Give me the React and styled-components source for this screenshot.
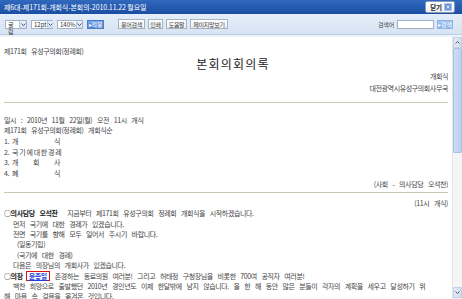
import React from 'react';
import styled, { createGlobalStyle } from 'styled-components';

const GlobalStyle = createGlobalStyle`
  html, body {
    margin: 0;
    padding: 0;
    background: #fff;
    overflow: hidden;
  }
  body {
    font-family: "Noto Sans CJK KR", "Noto Sans", sans-serif;
  }
`;

const Window = styled.div`
  width: 462px;
  height: 299px;
  display: flex;
  flex-direction: column;
  overflow: hidden;
`;

const TitleBar = styled.div`
  height: 14px;
  flex: none;
  display: flex;
  align-items: center;
  justify-content: space-between;
  padding: 0 7px 0 4px;
  background: linear-gradient(#3069be, #1b4ea2);
  color: #fff;
  font-size: 7px;
  letter-spacing: -0.1px;
`;

const CloseButton = styled.div`
  height: 10px;
  display: flex;
  align-items: center;
  gap: 2px;
  padding: 0 2px 0 4px;
  background: linear-gradient(#ffffff, #eef1f5);
  border: 1px solid #8c9cb5;
  border-radius: 2px;
  color: #222;
  font-size: 6.5px;
  font-weight: bold;
`;

const CloseIcon = styled.span`
  width: 6px;
  height: 6px;
  display: flex;
  align-items: center;
  justify-content: center;
  background: #6b93d9;
  border: 1px solid #b3c7ee;
`;

const Toolbar = styled.div`
  height: 20px;
  flex: none;
  display: flex;
  align-items: center;
  padding: 0 9px 0 5px;
  background: linear-gradient(#e4edf9, #d8e4f4);
  border-bottom: 1px solid #bccde6;
  font-size: 6.5px;
  color: #333;
`;

const ToolGroup = styled.div`
  display: flex;
  align-items: center;
  gap: ${p => p.$gap}px;
  margin-left: ${p => p.$offset};
`;

const Select = styled.div`
  width: ${p => p.$w}px;
  height: 9px;
  box-sizing: border-box;
  display: flex;
  align-items: stretch;
  background: #fff;
  border: 1px solid #a3b3cb;
`;

const SelectText = styled.span`
  flex: 1;
  padding-left: 2px;
  line-height: 7px;
  font-size: 6px;
  color: #333;
`;

const SelectArrow = styled.span`
  width: 6px;
  display: flex;
  align-items: center;
  justify-content: center;
  background: linear-gradient(#eaf1fb, #cfdcf0);
  border-left: 1px solid #b6c6de;
`;

const BlueButton = styled.div`
  width: ${p => p.$w}px;
  height: 9px;
  box-sizing: border-box;
  display: flex;
  align-items: center;
  justify-content: center;
  background: ${p => (p.$light ? 'linear-gradient(#a5c6ef, #86b0e6)' : 'linear-gradient(#7aa6e6, #4f84d6)')};
  border: 1px solid ${p => (p.$light ? '#8fb3e3' : '#4a7cc9')};
  color: #fff;
  font-size: 6px;
  letter-spacing: -0.2px;
`;

const GrayButton = styled.div`
  width: ${p => p.$w}px;
  height: 10px;
  box-sizing: border-box;
  display: flex;
  align-items: center;
  justify-content: center;
  background: linear-gradient(#ffffff, #eceff3);
  border: 1px solid #a9b2bf;
  color: #444;
  font-size: 6px;
  letter-spacing: -0.3px;
  white-space: nowrap;
`;

const SearchLabel = styled.span`
  font-size: 6px;
  color: #444;
  letter-spacing: -0.2px;
`;

const SearchInput = styled.div`
  width: 37px;
  height: 9px;
  box-sizing: border-box;
  background: #fff;
  border: 1px solid #9fb0c8;
`;

const Band = styled.div`
  height: 2px;
  flex: none;
  background: #edf3fa;
`;

const Main = styled.div`
  flex: 1;
  min-height: 0;
  display: flex;
`;

const Doc = styled.div`
  flex: 1;
  min-width: 0;
  padding: 9px 4px 0 4px;
  overflow: hidden;
  font-size: 7px;
  color: #444;
  letter-spacing: -0.4px;
  word-spacing: 3.5px;
  white-space: nowrap;
`;

const Line = styled.div`
  line-height: ${p => p.$lh || 11}px;
  text-align: ${p => p.$align || 'left'};
  padding-left: ${p => p.$indent || 0}px;
`;

const DocTitle = styled.div`
  font-size: 12px;
  line-height: 13px;
  letter-spacing: 1.2px;
  color: #222;
  text-align: center;
  padding-left: 14px;
`;

const Rule = styled.div`
  height: 1px;
  background: #cbc6b0;
  margin-top: ${p => p.$top}px;
`;

const Agenda = styled.div`
  margin-top: 11.6px;
`;

const AgendaLabel = styled.span`
  display: inline-block;
  width: 48px;
  margin-left: 3px;
  text-align: justify;
  text-align-last: justify;
  word-spacing: 0;
`;

const Speech = styled.div`
  margin-top: 4.8px;
`;

const Speaker = styled.span`
  font-weight: bold;
  color: #222;
  margin-right: 5px;
`;

const NameBox = styled.span`
  display: inline-block;
  line-height: 8px;
  padding: 0 2px;
  margin: 0 5px 0 3px;
  border: 1px solid #e01010;
  color: #1d3fe0;
  font-weight: bold;
  text-decoration: underline;
`;

const Scrollbar = styled.div`
  width: 10px;
  flex: none;
  display: flex;
  flex-direction: column;
  background: #f5f5f5;
  border-left: 1px solid #e6e6e6;
  box-sizing: border-box;
`;

const ScrollArrow = styled.div`
  height: 9px;
  flex: none;
  display: flex;
  align-items: center;
  justify-content: center;
  background: linear-gradient(90deg, #e3ebf7, #d2ddef);
  border: 1px solid #c3d1e8;
  margin-bottom: ${p => p.$bottom || 0}px;
`;

const Thumb = styled.div`
  height: 103px;
  flex: none;
  background: linear-gradient(90deg, #cddcf5, #bcd0f0);
  border: 1px solid #aac0e6;
  border-radius: 1px;
`;

const Track = styled.div`
  flex: 1;
`;

const Chevron = ({ up }) => (
  <svg width="5" height="3" viewBox="0 0 5 3">
    <path d={up ? 'M0.5 2.5 L2.5 0.5 L4.5 2.5' : 'M0.5 0.5 L2.5 2.5 L4.5 0.5'} fill="none" stroke="#3a4a66" strokeWidth="0.9" />
  </svg>
);

const DropSelect = ({ w, children }) => (
  <Select $w={w}>
    <SelectText>{children}</SelectText>
    <SelectArrow>
      <Chevron />
    </SelectArrow>
  </Select>
);

const agenda = [
  ['1.', '개식'],
  ['2.', '국기에대한경례'],
  ['3.', '개회사'],
  ['4.', '폐식'],
];

export default function App() {
  return (
    <Window>
      <GlobalStyle />
      <TitleBar>
        <span>제6대-제171회-개회식-본회의-2010.11.22 월요일</span>
        <CloseButton>
          닫기
          <CloseIcon>
            <svg width="4" height="4" viewBox="0 0 4 4">
              <path d="M0.5 0.5 L3.5 3.5 M3.5 0.5 L0.5 3.5" stroke="#fff" strokeWidth="0.8" />
            </svg>
          </CloseIcon>
        </CloseButton>
      </TitleBar>

      <Toolbar>
        <ToolGroup $gap={4}>
          <DropSelect w={22}>굴림</DropSelect>
          <DropSelect w={22}>12pt</DropSelect>
          <DropSelect w={26}>140%</DropSelect>
          <BlueButton $w={17}>▸적용</BlueButton>
        </ToolGroup>
        <ToolGroup $gap={3} $offset="14px">
          <GrayButton $w={27}>용어검색</GrayButton>
          <GrayButton $w={15}>인쇄</GrayButton>
          <GrayButton $w={21}>도움말</GrayButton>
          <GrayButton $w={38}>페이지맞보기</GrayButton>
        </ToolGroup>
        <ToolGroup $gap={3} $offset="auto">
          <SearchLabel>검색어</SearchLabel>
          <SearchInput />
          <BlueButton $w={16} $light>▸검색</BlueButton>
        </ToolGroup>
      </Toolbar>
      <Band />

      <Main>
        <Doc>
          <Line>제171회 유성구의회(정례회)</Line>
          <DocTitle>본회의회의록</DocTitle>
          <Line $lh={12} $align="right">개회식</Line>
          <Line $lh={12} $align="right">대전광역시유성구의회사무국</Line>
          <Rule $top={8} />

          <Agenda>
            <Line $lh={10.7}>일시 : 2010년 11월 22일(월) 오전 11시 개식</Line>
            <Line $lh={10.7}>제171회 유성구의회(정례회) 개회식순</Line>
            {agenda.map(([num, label]) => (
              <Line $lh={10.7} key={num}>
                {num}
                <AgendaLabel>{label.split('').join(' ')}</AgendaLabel>
              </Line>
            ))}
            <Line $lh={10.7} $align="right">(사회 - 의사담당 오석찬)</Line>
          </Agenda>
          <Rule $top={2.5} />

          <Speech>
            <Line $lh={10.4} $align="right">(11시 개식)</Line>
            <Line $lh={10.4}>
              <Speaker>○의사담당 오석찬</Speaker> 지금부터 제171회 유성구의회 정례회 개회식을 시작하겠습니다.
            </Line>
            <Line $lh={10.4} $indent={9}>먼저 국기에 대한 경례가 있겠습니다.</Line>
            <Line $lh={10.4} $indent={9}>전면 국기를 향해 모두 일어서 주시기 바랍니다.</Line>
            <Line $lh={10.4} $indent={13}>(일동기립)</Line>
            <Line $lh={10.4} $indent={13}>(국기에 대한 경례)</Line>
            <Line $lh={10.4} $indent={9}>다음은 의장님의 개회사가 있겠습니다.</Line>
            <Line $lh={10.4}>
              <Speaker style={{ marginRight: 0 }}>○의장</Speaker>
              <NameBox>윤종일</NameBox>
              존경하는 동료의원 여러분! 그리고 허태정 구청장님을 비롯한 700여 공직자 여러분!
            </Line>
            <Line $lh={10.4} $indent={9}>
              백찬 희망으로 출발했던 2010년 경인년도 이제 한달밖에 남지 않습니다. 올 한 해 동안 많은 분들이 각자의 계획을 세우고 달성하기 위
            </Line>
            <Line $lh={10.4}>해 마음 속 걸음을 옮겨온 것입니다.</Line>
          </Speech>
        </Doc>

        <Scrollbar>
          <ScrollArrow>
            <Chevron up />
          </ScrollArrow>
          <Thumb />
          <Track />
          <ScrollArrow $bottom={1}>
            <Chevron />
          </ScrollArrow>
        </Scrollbar>
      </Main>
    </Window>
  );
}
